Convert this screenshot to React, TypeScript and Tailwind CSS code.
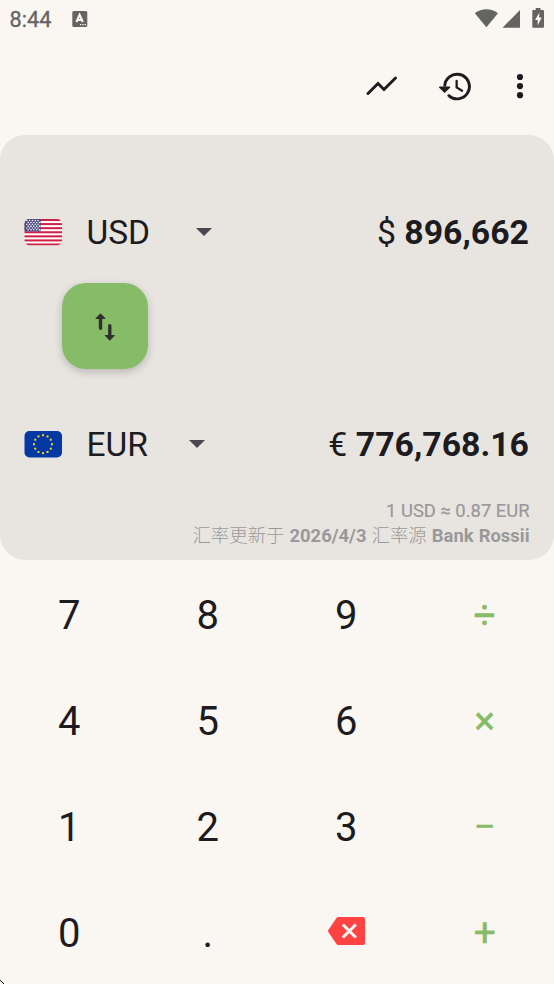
import React from "react";

const Flag: React.FC<{ code: string }> = ({ code }) => {
  if (code === "USD") {
    return (
      <svg width="38" height="28" viewBox="0 0 38 28">
        <clipPath id="us">
          <rect x="0.5" y="1" width="37.5" height="26.5" rx="5" />
        </clipPath>
        <g clipPath="url(#us)">
          <rect width="38" height="28" fill="#fff" />
          {[0, 1, 2, 3, 4, 5, 6].map((i) => (
            <rect key={i} y={1 + i * 4.08} width="38" height="2.04" fill="#cf2144" />
          ))}
          <rect y="1" width="16.5" height="12.4" fill="#45467f" />
          {[0, 1, 2, 3, 4, 5].map((row) =>
            [0, 1, 2, 3, 4].map((col) => (
              <circle
                key={`${row}-${col}`}
                cx={2.8 + col * 2.8 + (row % 2) * 1.4}
                cy={2.6 + row * 1.85}
                r="0.8"
                fill="#fff"
              />
            ))
          )}
        </g>
      </svg>
    );
  }
  return (
    <svg width="38" height="28" viewBox="0 0 38 28">
      <rect x="0.5" y="1" width="37.5" height="26.5" rx="5" fill="#0638a4" />
      {Array.from({ length: 12 }, (_, i) => {
        const angle = (i * Math.PI) / 6;
        return (
          <rect
            key={i}
            x={19 + 9 * Math.sin(angle) - 1}
            y={14.2 - 9 * Math.cos(angle) - 1}
            width="2"
            height="2"
            fill="#f5d51c"
          />
        );
      })}
    </svg>
  );
};

const Caret: React.FC = () => (
  <svg width="16" height="8" viewBox="0 0 16 8" fill="#49474f">
    <path d="M0 0h16L8 8z" />
  </svg>
);

const StatusBar: React.FC = () => (
  <div className="flex h-[38px] items-center justify-between pl-[9.5px] pr-[10px] text-[#646462]">
    <div className="flex items-center">
      <span className="w-[62.5px] pt-px text-[21.7px] leading-[37px] [-webkit-text-stroke:0.3px]">
        8:44
      </span>
      <svg width="16" height="16" viewBox="0 0 16 16">
        <rect x="0.3" width="15" height="16" rx="1.6" fill="#646462" />
        <path
          d="M4.4 11 7.6 3.8 10.8 11M5.6 9h4"
          stroke="#faf7f2"
          strokeWidth="2.1"
          fill="none"
        />
        <path d="M8 13.7h1.3m1 0h1.3m1 0h1.3" stroke="#faf7f2" strokeWidth="1.3" />
      </svg>
    </div>
    <svg width="70" height="22" viewBox="0 0 70 22" fill="#646462">
      <path d="M0.8 5.3C7.5 0 17.3 0 24 5.3L12.4 19.2z" />
      <path d="M46 2v17.7H28.5z" />
      <path d="M61.7.1h4.8v2H69a1 1 0 0 1 1 1v15.6a1 1 0 0 1-1 1H59.3a1 1 0 0 1-1-1V3.1a1 1 0 0 1 1-1h2.4z" />
      <path d="M65.5 4.5 61 12h2.7v5.5l4-8h-2.7z" fill="#faf7f2" />
    </svg>
  </div>
);

const Toolbar: React.FC = () => (
  <div className="flex h-[97px] items-center justify-end pb-px pr-[30px] text-[#1c1b1f]">
    <button aria-label="Chart">
      <svg width="32" height="20" viewBox="0 0 32 20" fill="none">
        <path
          d="M2 17.5 12 7.5 18 13.5 29.5 2"
          stroke="currentColor"
          strokeWidth="2.9"
          strokeLinecap="round"
        />
      </svg>
    </button>
    <button aria-label="History" className="ml-[39px]">
      <svg width="37" height="37" viewBox="0 0 24 24" fill="none">
        <path
          d="M5 12a8 8 0 1 1 2.8 6.1"
          stroke="currentColor"
          strokeWidth="1.9"
        />
        <circle cx="7.7" cy="17.9" r="0.95" fill="currentColor" />
        <path
          d="M12.75 8.3v4.3l3.5 2.1"
          stroke="currentColor"
          strokeWidth="1.5"
          strokeLinecap="round"
        />
        <path
          d="M1.8 12h6.3c.45 0 .65.5.35.85l-3.15 3.1a.5.5 0 0 1-.7 0L1.45 12.85C1.15 12.5 1.35 12 1.8 12z"
          fill="currentColor"
        />
      </svg>
    </button>
    <button aria-label="More" className="ml-[42px]">
      <svg width="8" height="26" viewBox="0 0 8 26" fill="currentColor">
        <circle cx="4" cy="4" r="3.1" />
        <circle cx="4" cy="13.1" r="3.1" />
        <circle cx="4" cy="22.2" r="3.1" />
      </svg>
    </button>
  </div>
);

interface CurrencyRowProps {
  code: string;
  symbol: string;
  amount: string;
}

const CurrencyRow: React.FC<CurrencyRowProps> = ({ code, symbol, amount }) => (
  <div className="flex h-[60px] items-center justify-between pl-6 pr-[25px] text-[33.8px] text-[#1c1b1f]">
    <div className="flex items-center">
      <Flag code={code} />
      <span className="ml-[24.5px] mr-[46px] pt-[3px] text-[33.5px]">{code}</span>
      <div className={code === "EUR" ? "-ml-[5px]" : ""}>
        <Caret />
      </div>
    </div>
    <div className="pt-[3px]">
      {symbol} <span className="font-bold">{amount}</span>
    </div>
  </div>
);

const Converter: React.FC = () => (
  <div className="h-[425px] rounded-[25px] bg-[#e8e5e0] pt-[67px]">
    <CurrencyRow code="USD" symbol="$" amount="896,662" />
    <div className="mt-[21px] h-[86px] pl-[62px]">
      <button
        aria-label="Swap"
        className="flex h-[86px] w-[86px] items-center justify-center rounded-[24px] bg-[#86bc67] pr-px pt-px shadow-[0_3px_8px_rgba(0,0,0,0.2)]"
      >
        <svg width="22" height="30" viewBox="0 0 22 30" fill="#303030">
          <path d="M6.5 1.2 11.4 6.2q.6.8-.4.8H8.2v9.3a1.7 1.7 0 0 1-3.4 0V7H2q-1 0-.4-.8z" />
          <path d="M15.8 28.8l-4.9-5q-.6-.8.4-.8h2.8v-9.3a1.7 1.7 0 0 1 3.4 0V23h2.8q1 0 .4.8z" />
        </svg>
      </button>
    </div>
    <div className="mt-[45px]">
      <CurrencyRow code="EUR" symbol="€" amount="776,768.16" />
    </div>
    <div className="mt-[24px] pr-[24.5px] text-right text-[18.4px] leading-[25px] text-[#99989a]">
      <p className="[-webkit-text-stroke:0.2px]">1 USD ≈ 0.87 EUR</p>
      <p className="font-light [word-spacing:0.6px]">
        汇率更新于 <b className="font-bold">2026/4/3</b> 汇率源{" "}
        <b className="font-bold">Bank Rossii</b>
      </p>
    </div>
  </div>
);

const keys = [
  "7", "8", "9", "÷",
  "4", "5", "6", "×",
  "1", "2", "3", "−",
  "0", ".", "del", "+",
];

const Key: React.FC<{ value: string }> = ({ value }) => {
  if (value === "del") {
    return (
      <button aria-label="Delete" className="flex items-center justify-center pl-px">
        <svg width="38" height="28" viewBox="0 0 38 28">
          <path
            d="M10.5 0H35a2 2 0 0 1 2 2v24a2 2 0 0 1-2 2H10.5a2.5 2.5 0 0 1-2-1L.3 15a1.8 1.8 0 0 1 0-2L8.500 1a2.5 2.5 0 0 1 2-1z"
            fill="#ff4342"
          />
          <path
            d="M14.8 7.5 27.8 20.5M27.8 7.5 14.8 20.5"
            stroke="#faf7f2"
            strokeWidth="3.1"
          />
        </svg>
      </button>
    );
  }
  if ("÷×−+".includes(value)) {
    return (
      <button className="pt-[5px] text-[39px] text-[#86bc67] [-webkit-text-stroke:0.4px]">
        {value}
      </button>
    );
  }
  return <button className="pt-[5px] text-[40px] text-[#1c1b1f]">{value}</button>;
};

const App: React.FC = () => {
  return (
    <div className="relative h-[984px] w-[554px] overflow-hidden bg-[#faf7f2] font-[Roboto,'Noto_Sans_CJK_SC',sans-serif]">
      <StatusBar />
      <Toolbar />
      <Converter />
      <div className="grid h-[424px] grid-cols-4 grid-rows-4">
        {keys.map((key) => (
          <Key key={key} value={key} />
        ))}
      </div>
      <svg className="absolute bottom-0 left-0" width="4" height="4" viewBox="0 0 4 4">
        <path d="M0 0h1v1H0zM1 1h1v1H1zM2 2h1v1H2zM3 3h1v1H3z" fill="#111" />
      </svg>
    </div>
  );
};

export default App;
